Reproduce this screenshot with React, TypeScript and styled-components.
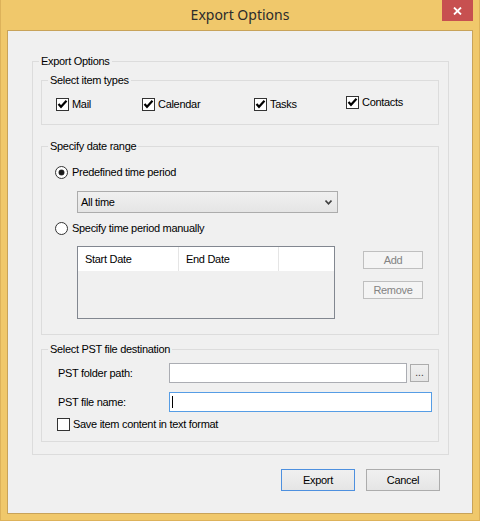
import React from "react";
import styled, { createGlobalStyle } from "styled-components";

const GlobalStyle = createGlobalStyle`
  html, body { margin: 0; padding: 0; }
  body {
    font-family: "Liberation Sans", Arial, sans-serif;
    font-size: 11px;
    letter-spacing: -0.3px;
    color: #000;
    background: #F0C86B;
  }
  * { box-sizing: border-box; }
`;

const Window = styled.div`
  width: 480px;
  height: 521px;
  display: flex;
  flex-direction: column;
  background: #F0C86B;
  border: 1px solid #DDB25A;
  border-top: none;
`;

const TitleBar = styled.div`
  height: 30px;
  flex: none;
  display: grid;
  grid-template-columns: 1fr auto 1fr;
  align-items: start;
`;

const Title = styled.div`
  grid-column: 2;
  font-family: "Noto Sans", "Open Sans", sans-serif;
  font-size: 14px;
  letter-spacing: 0;
  line-height: 30px;
  color: #2B2B2B;
  white-space: nowrap;
`;

const CloseButton = styled.div`
  grid-column: 3;
  justify-self: end;
  margin-right: 6px;
  width: 31px;
  height: 21px;
  background: #C75050;
  display: flex;
  align-items: center;
  justify-content: center;
`;

const Client = styled.div`
  flex: 1;
  margin: 0 6px 6px;
  border: 1px solid #C8A35A;
  background: #F0F0F0;
  padding: 30px 23px 0 24px;
  display: flex;
  flex-direction: column;
`;

const Group = styled.div`
  position: relative;
  border: 1px solid #DCDCDC;
`;

const Legend = styled.span`
  position: absolute;
  top: -7px;
  left: 6px;
  padding: 0 2px;
  line-height: 13px;
  background: #F0F0F0;
  white-space: nowrap;
`;

const OuterGroup = styled(Group)`
  padding: 18px 9px 12px 8px;
  display: flex;
  flex-direction: column;
`;

const ItemTypesGroup = styled(Group)`
  padding: 17px 0 13px 14px;
  display: grid;
  grid-template-columns: 86px 112px 92px auto;
  align-items: start;
`;

const DateGroup = styled(Group)`
  margin-top: 21px;
  padding: 19px 0 15px 13px;
  display: flex;
  flex-direction: column;
  align-items: flex-start;
`;

const DestGroup = styled(Group)`
  margin-top: 14px;
  padding: 13px 0 10px 15px;
  display: flex;
  flex-direction: column;
  align-items: flex-start;
`;

const OptionItem = styled.label<{ $raise?: number; $top?: number }>`
  display: flex;
  align-items: center;
  gap: 3px;
  height: 13px;
  line-height: 13px;
  white-space: nowrap;
  margin-top: ${(p) => (p.$top ?? 0) - (p.$raise ?? 0)}px;
`;

const Box = styled.span`
  width: 13px;
  height: 13px;
  flex: none;
  border: 1px solid #333;
  background: #fff;
  display: flex;
  align-items: center;
  justify-content: center;
`;

const RadioCircle = styled.span`
  width: 13px;
  height: 13px;
  flex: none;
  border: 1px solid #333;
  border-radius: 50%;
  background: #fff;
  display: flex;
  align-items: center;
  justify-content: center;
  margin-right: 1px;
`;

const RadioDot = styled.span`
  width: 5px;
  height: 5px;
  border-radius: 50%;
  background: #1a1a1a;
  box-shadow: 0 0 0 0.5px #444;
`;

const Combo = styled.div`
  margin-top: 12px;
  margin-left: 22px;
  width: 261px;
  height: 22px;
  border: 1px solid #ACACAC;
  background: linear-gradient(#F0F0F0, #E5E5E5);
  display: flex;
  align-items: center;
  justify-content: space-between;
  padding: 0 5px 0 3px;
`;

const ListRow = styled.div`
  margin-top: 11px;
  margin-left: 22px;
  display: flex;
  gap: 28px;
  align-items: flex-start;
`;

const ListView = styled.div`
  width: 258px;
  height: 73px;
  border: 1px solid #828790;
  background: #F0F0F0;
`;

const ListHeader = styled.div`
  height: 24px;
  background: #fff;
  display: grid;
  grid-template-columns: 101px 100px 1fr;
`;

const HeaderCell = styled.div<{ $sep?: boolean }>`
  padding-left: 7px;
  display: flex;
  align-items: center;
  border-right: ${(p) => (p.$sep ? "1px solid #E5E5E5" : "none")};
`;

const SideButtons = styled.div`
  padding-top: 5px;
  display: flex;
  flex-direction: column;
  gap: 12px;
`;

const DisabledButton = styled.div`
  width: 60px;
  height: 18px;
  border: 1px solid #BFBFBF;
  background: #F4F4F4;
  color: #838383;
  display: flex;
  align-items: center;
  justify-content: center;
`;

const FieldGrid = styled.div`
  display: grid;
  grid-template-columns: 112px auto;
  row-gap: 9px;
  align-items: center;
`;

const FieldLabel = styled.div`
  padding-left: 1px;
  white-space: nowrap;
`;

const FieldRow = styled.div`
  display: flex;
  align-items: center;
  gap: 3px;
`;

const TextBox = styled.div<{ $width: number; $focused?: boolean }>`
  width: ${(p) => p.$width}px;
  height: 20px;
  background: #fff;
  border: 1px solid ${(p) => (p.$focused ? "#569DE5" : "#ABADB3")};
  display: flex;
  align-items: center;
  padding-left: 2px;
`;

const Caret = styled.span`
  width: 1px;
  height: 12px;
  background: #000;
`;

const BrowseButton = styled.div`
  width: 19px;
  height: 18px;
  border: 1px solid #ACACAC;
  background: linear-gradient(#F0F0F0, #E5E5E5);
  display: flex;
  align-items: flex-end;
  justify-content: center;
  font-size: 10px;
  letter-spacing: 0;
  line-height: 12px;
  padding-bottom: 2px;
  color: #333;
`;

const ButtonRow = styled.div`
  margin-top: 14px;
  padding-right: 9px;
  display: flex;
  justify-content: flex-end;
  gap: 11px;
`;

const DialogButton = styled.div<{ $default?: boolean }>`
  width: 74px;
  height: 22px;
  border: 1px solid ${(p) => (p.$default ? "#4D90DF" : "#ACACAC")};
  background: linear-gradient(#F0F0F0, #E5E5E5);
  display: flex;
  align-items: center;
  justify-content: center;
`;

const CheckMark = () => (
  <svg width="11" height="11" viewBox="0 0 11 11">
    <path d="M1.5 5 L4 7.8 L9.5 1.8" fill="none" stroke="#000" strokeWidth="2.2" />
  </svg>
);

const CheckBox = ({ checked, label, raise, top }: { checked?: boolean; label: string; raise?: number; top?: number }) => (
  <OptionItem $raise={raise} $top={top}>
    <Box>{checked && <CheckMark />}</Box>
    {label}
  </OptionItem>
);

const Radio = ({ checked, label, top }: { checked?: boolean; label: string; top?: number }) => (
  <OptionItem $top={top}>
    <RadioCircle>{checked && <RadioDot />}</RadioCircle>
    {label}
  </OptionItem>
);

export default function App() {
  return (
    <>
      <GlobalStyle />
      <Window>
        <TitleBar>
          <Title>Export Options</Title>
          <CloseButton>
            <svg width="9" height="8" viewBox="0 0 9 8">
              <path d="M1 0.5 L8 7.5 M8 0.5 L1 7.5" stroke="#fff" strokeWidth="1.8" />
            </svg>
          </CloseButton>
        </TitleBar>
        <Client>
          <OuterGroup>
            <Legend>Export Options</Legend>
            <ItemTypesGroup>
              <Legend>Select item types</Legend>
              <CheckBox checked label="Mail" />
              <CheckBox checked label="Calendar" />
              <CheckBox checked label="Tasks" />
              <CheckBox checked label="Contacts" raise={2} />
            </ItemTypesGroup>
            <DateGroup>
              <Legend>Specify date range</Legend>
              <Radio checked label="Predefined time period" />
              <Combo>
                <span>All time</span>
                <svg width="7" height="5" viewBox="0 0 7 5">
                  <path d="M0.5 0.5 L3.5 3.8 L6.5 0.5" fill="none" stroke="#404040" strokeWidth="1.6" />
                </svg>
              </Combo>
              <Radio label="Specify time period manually" top={9} />
              <ListRow>
                <ListView>
                  <ListHeader>
                    <HeaderCell $sep>Start Date</HeaderCell>
                    <HeaderCell $sep>End Date</HeaderCell>
                    <HeaderCell />
                  </ListHeader>
                </ListView>
                <SideButtons>
                  <DisabledButton>Add</DisabledButton>
                  <DisabledButton>Remove</DisabledButton>
                </SideButtons>
              </ListRow>
            </DateGroup>
            <DestGroup>
              <Legend>Select PST file destination</Legend>
              <FieldGrid>
                <FieldLabel>PST folder path:</FieldLabel>
                <FieldRow>
                  <TextBox $width={238} />
                  <BrowseButton>...</BrowseButton>
                </FieldRow>
                <FieldLabel>PST file name:</FieldLabel>
                <FieldRow>
                  <TextBox $width={263} $focused>
                    <Caret />
                  </TextBox>
                </FieldRow>
              </FieldGrid>
              <CheckBox label="Save item content in text format" top={6} />
            </DestGroup>
          </OuterGroup>
          <ButtonRow>
            <DialogButton $default>Export</DialogButton>
            <DialogButton>Cancel</DialogButton>
          </ButtonRow>
        </Client>
      </Window>
    </>
  );
}
